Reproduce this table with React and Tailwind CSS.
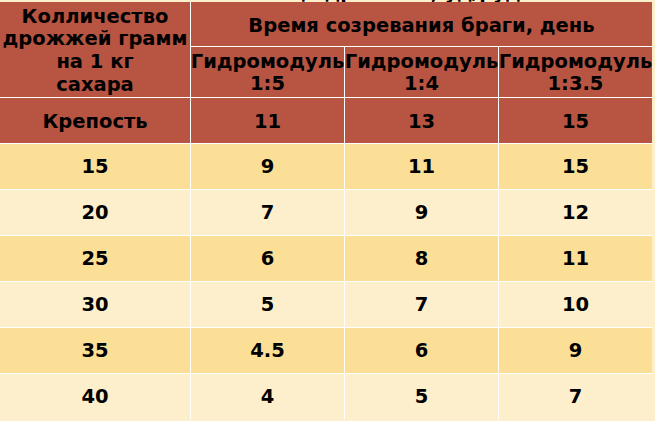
export default function App() {
  const rows = [
    ["15", "9", "11", "15"],
    ["20", "7", "9", "12"],
    ["25", "6", "8", "11"],
    ["30", "5", "7", "10"],
    ["35", "4.5", "6", "9"],
    ["40", "4", "5", "7"],
  ];
  const red = "bg-[#b85442]";
  const cell = "flex items-center justify-center text-center";
  return (
    <div
      className="w-[655px] h-[421px] overflow-hidden bg-[#fdefcc] text-black font-bold"
      style={{ fontFamily: '"DejaVu Sans", Verdana, sans-serif' }}
    >
      <div className="relative h-[2px] overflow-hidden">
        <div className="absolute left-[225px] top-[-17px] text-[19px] leading-[19px] whitespace-nowrap">
          Таблица дрожжей, уд/руд
        </div>
      </div>
      <div className="grid w-[652px] grid-cols-[190px_153px_153px_153px] grid-rows-[44px_50px_45px_45px_45px_45px_45px_45px_45px] gap-px bg-white text-[19.5px]">
        <div className={`${cell} ${red} row-span-2 flex-col leading-[22.7px] pt-[3px] whitespace-nowrap`}>
          <span>Колличество</span>
          <span>дрожжей грамм</span>
          <span>на 1 кг</span>
          <span>сахара</span>
        </div>
        <div className={`${cell} ${red} col-span-3 pt-[4px]`}>Время созревания браги, день</div>
        <div className={`${cell} ${red} flex-col leading-[22px] whitespace-nowrap pt-[1px]`}>
          <span>Гидромодуль</span>
          <span>1:5</span>
        </div>
        <div className={`${cell} ${red} flex-col leading-[22px] whitespace-nowrap pt-[1px]`}>
          <span>Гидромодуль</span>
          <span>1:4</span>
        </div>
        <div className={`${cell} ${red} flex-col leading-[22px] whitespace-nowrap pt-[1px]`}>
          <span>Гидромодуль</span>
          <span>1:3.5</span>
        </div>
        <div className={`${cell} ${red} pt-[2px]`}>Крепость</div>
        <div className={`${cell} ${red} pt-[2px]`}>11</div>
        <div className={`${cell} ${red} pt-[2px]`}>13</div>
        <div className={`${cell} ${red} pt-[2px]`}>15</div>
        {rows.map((r, i) =>
          r.map((v, j) => (
            <div
              key={`${i}-${j}`}
              className={`${cell} pt-[1px] ${i % 2 === 0 ? "bg-[#fbdf97]" : "bg-[#fdefcc]"}`}
            >
              {v}
            </div>
          ))
        )}
      </div>
    </div>
  );
}
